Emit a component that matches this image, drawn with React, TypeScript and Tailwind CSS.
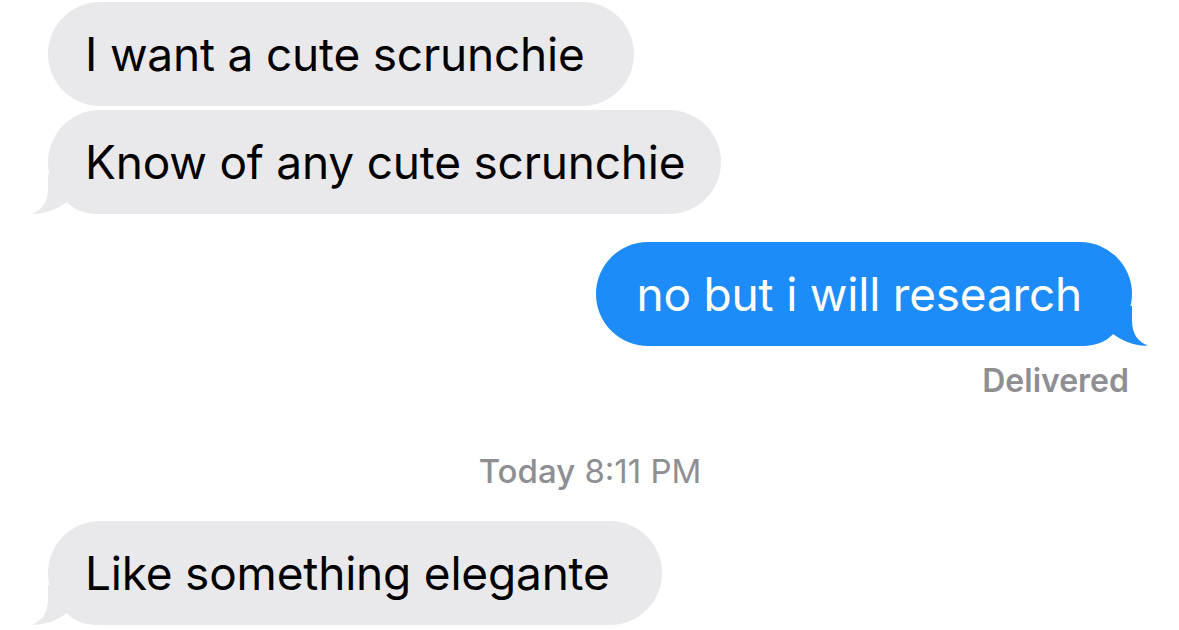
import React from "react";

const font = { fontFamily: "Inter, 'Noto Sans', sans-serif" };

function GrayTail() {
  return (
    <svg
      className="absolute left-[-18px] bottom-0 w-[70px] h-[40px]"
      viewBox="0 0 70 40"
    >
      <path
        d="M18 0 L18 14 C18 28 12 36 2 39.6 C14 40.5 28 35 37 28 C44 36 54 40 70 40 L70 0 Z"
        fill="#e9e9eb"
      />
    </svg>
  );
}

function BlueTail() {
  return (
    <svg
      className="absolute right-[-18px] bottom-0 w-[70px] h-[40px]"
      viewBox="0 0 70 40"
    >
      <path
        d="M52 0 L52 14 C52 28 58 36 68 39.6 C56 40.5 42 35 33 28 C26 36 16 40 0 40 L0 0 Z"
        fill="#1d8cf8"
      />
    </svg>
  );
}

function Gray({ text, tail, className = "" }: { text: string; tail?: boolean; className?: string }) {
  return (
    <div
      className={`relative self-start h-[104px] flex items-center rounded-[52px] bg-[#e9e9eb] pl-[37px] ${className}`}
    >
      {tail && <GrayTail />}
      <span className="relative text-[46px] leading-none text-black tracking-[-0.2px]">
        {text}
      </span>
    </div>
  );
}

export default function App() {
  return (
    <div
      className="w-[1179px] h-[630px] overflow-hidden bg-white flex flex-col pt-[2px] pl-[48px] pr-[47px]"
      style={font}
    >
      <Gray text="I want a cute scrunchie" className="pr-[49px]" />
      <Gray text="Know of any cute scrunchie" tail className="mt-[4px] pr-[36px]" />

      {/* sent */}
      <div className="mt-[28px] self-end relative h-[104px] flex items-center rounded-[52px] bg-[#1d8cf8] pl-[40px] pr-[50px]">
        <BlueTail />
        <span className="relative text-[46px] leading-none text-white tracking-[-0.2px]">
          no but i will research
        </span>
      </div>
      <div className="self-end mt-[17px] pr-[3px] text-[32px] leading-[36px] font-semibold text-[#8e8e93]">
        Delivered
      </div>

      <div className="self-center mt-[52px] text-[33px] leading-[40px] text-[#8e8e93]">
        <span className="font-medium">Today</span> 8:11 PM
      </div>

      <Gray text="Like something elegante" tail className="mt-[30px] pr-[52px]" />
    </div>
  );
}
